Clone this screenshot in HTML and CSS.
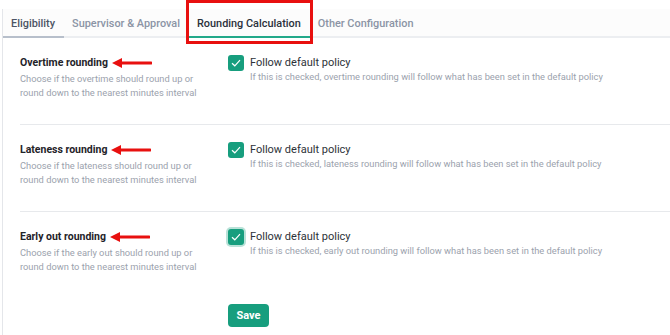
FILE: index.html
```html
<!DOCTYPE html>
<html lang="en">
<head>
    <meta charset="UTF-8">
    <meta name="viewport" content="width=device-width, initial-scale=1.0">
    <title>Rounding Calculation</title>
    <link rel="stylesheet" href="styles.css">
</head>
<body>
    <div class="panel">
        <nav class="tabs">
            <span class="tab tab-hover">Eligibility</span>
            <span class="tab">Supervisor &amp; Approval</span>
            <span class="tab tab-active">Rounding Calculation<span class="highlight"></span></span>
            <span class="tab">Other Configuration</span>
        </nav>

        <div class="settings">
            <div class="row">
                <div class="label">
                    <h3>Overtime rounding
                        <svg class="arrow" width="40" height="10" viewBox="0 0 40 10"><line x1="7" y1="5" x2="39" y2="5" stroke="#e8100f" stroke-width="3" stroke-linecap="round"/><polygon points="0,5 10,0 10,10" fill="#e8100f"/></svg>
                    </h3>
                    <p>Choose if the overtime should round up or round down to the nearest minutes interval</p>
                </div>
                <div class="option">
                    <span class="check"><svg width="10" height="8" viewBox="0 0 10 8"><polyline points="1,4.2 3.8,6.8 9,1.2" fill="none" stroke="#fff" stroke-width="1.2"/></svg></span>
                    <div>
                        <div class="option-title">Follow default policy</div>
                        <div class="option-desc">If this is checked, overtime rounding will follow what has been set in the default policy</div>
                    </div>
                </div>
            </div>

            <div class="row">
                <div class="label">
                    <h3>Lateness rounding
                        <svg class="arrow" width="40" height="10" viewBox="0 0 40 10"><line x1="7" y1="5" x2="39" y2="5" stroke="#e8100f" stroke-width="3" stroke-linecap="round"/><polygon points="0,5 10,0 10,10" fill="#e8100f"/></svg>
                    </h3>
                    <p>Choose if the lateness should round up or round down to the nearest minutes interval</p>
                </div>
                <div class="option">
                    <span class="check"><svg width="10" height="8" viewBox="0 0 10 8"><polyline points="1,4.2 3.8,6.8 9,1.2" fill="none" stroke="#fff" stroke-width="1.2"/></svg></span>
                    <div>
                        <div class="option-title">Follow default policy</div>
                        <div class="option-desc">If this is checked, lateness rounding will follow what has been set in the default policy</div>
                    </div>
                </div>
            </div>

            <div class="row last">
                <div class="label">
                    <h3>Early out rounding
                        <svg class="arrow" width="40" height="10" viewBox="0 0 40 10"><line x1="7" y1="5" x2="39" y2="5" stroke="#e8100f" stroke-width="3" stroke-linecap="round"/><polygon points="0,5 10,0 10,10" fill="#e8100f"/></svg>
                    </h3>
                    <p>Choose if the early out should round up or round down to the nearest minutes interval</p>
                </div>
                <div class="option">
                    <span class="check focused"><svg width="10" height="8" viewBox="0 0 10 8"><polyline points="1,4.2 3.8,6.8 9,1.2" fill="none" stroke="#fff" stroke-width="1.2"/></svg></span>
                    <div>
                        <div class="option-title">Follow default policy</div>
                        <div class="option-desc">If this is checked, early out rounding will follow what has been set in the default policy</div>
                    </div>
                </div>
            </div>

            <div class="actions">
                <button class="save">Save</button>
            </div>
        </div>
    </div>
</body>
</html>
```

FILE: styles.css
```css
body {
    margin: 0;
    font-family: Roboto, 'Liberation Sans', sans-serif;
    background: #fff;
    color: #23272e;
    overflow: hidden;
}

.panel {
    margin: 9px 0 0 2px;
    border-left: 1px solid #e4e6ea;
    min-height: 330px;
}

/* Tabs */
.tabs {
    display: flex;
    background: #fcfcfc;
    border-bottom: 2px solid #eceef1;
}

.tab {
    position: relative;
    padding: 8px 9px 6px 8px;
    font-size: 10.9px;
    line-height: 13px;
    font-weight: 500;
    color: #8b94a5;
    border-bottom: 2px solid transparent;
    margin-bottom: -2px;
}

.tab-hover {
    color: #4c5465;
    border-bottom-color: #b7bfcb;
}

.tab-active {
    color: #2a303b;
    border-bottom-color: #22a98a;
}

/* red annotation box */
.highlight {
    position: absolute;
    left: -3px;
    right: -3px;
    top: -9px;
    bottom: -8px;
    border: 3px solid #e8100f;
}

/* Rows */
.settings {
    padding-left: 17px;
}

.row {
    display: grid;
    grid-template-columns: 208px 1fr;
    padding: 18px 0 24px;
    border-bottom: 1px solid #e7e9ec;
}

.row.last {
    border-bottom: none;
}

.label h3 {
    margin: 0 0 2px;
    font-size: 10.5px;
    line-height: 14px;
    font-weight: 700;
    color: #1f2329;
    display: flex;
    align-items: center;
}

.arrow {
    margin-left: 4px;
}

.label p {
    margin: 0;
    font-size: 9.3px;
    line-height: 14px;
    color: #9ba2ad;
    max-width: 185px;
}

.option {
    display: flex;
    gap: 6px;
    align-items: flex-start;
}

.check {
    flex: none;
    width: 16px;
    height: 16px;
    margin-top: -1px;
    border-radius: 3px;
    background: #179e7e;
    display: flex;
    align-items: center;
    justify-content: center;
}

.check.focused {
    box-shadow: 0 0 0 2px rgba(23, 158, 126, 0.3);
}

.option-title {
    font-size: 11px;
    line-height: 14px;
    color: #2d3238;
}

.option-desc {
    font-size: 9.3px;
    line-height: 14px;
    color: #9ba2ad;
}

.actions {
    padding: 6px 0 0 208px;
}

.save {
    width: 41px;
    height: 23px;
    padding: 0;
    border: none;
    border-radius: 4px;
    background: #179e7e;
    color: #fff;
    font-family: Roboto, 'Liberation Sans', sans-serif;
    font-weight: 700;
    font-size: 11px;
}
```
